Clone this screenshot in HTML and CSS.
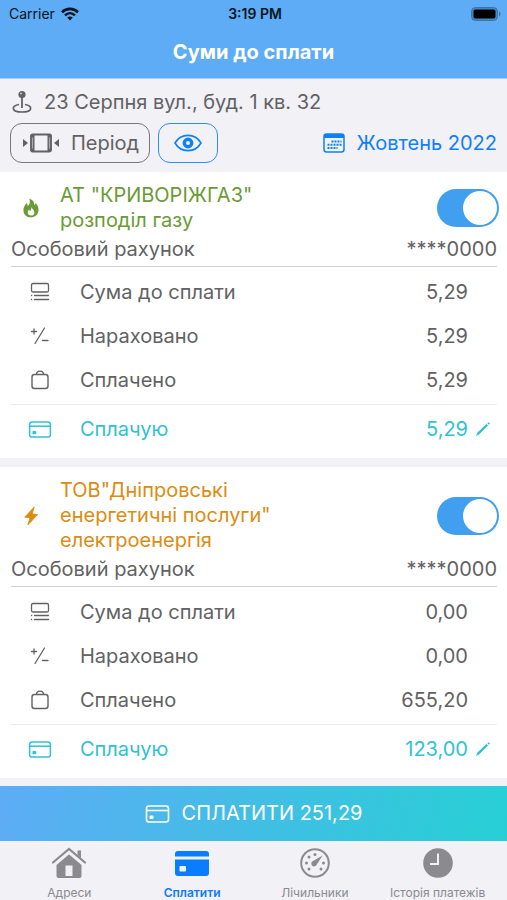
FILE: index.html
```html
<!DOCTYPE html>
<html lang="uk">
<head>
<meta charset="utf-8">
<meta name="viewport" content="width=device-width, initial-scale=1">
<title>Суми до сплати</title>
<link rel="stylesheet" href="styles.css">
</head>
<body>
<svg class="sprite" aria-hidden="true">
  <symbol id="i-sum" viewBox="0 0 20 20"><g fill="none" stroke="currentColor" stroke-width="1.3" stroke-linecap="round"><rect x="1.500" y="1.500" width="17" height="8.500" rx="1.500"/><path d="M4.500 13.500h14M4.500 17.500h14M1.500 13.500h.2M1.500 17.500h.2"/></g></symbol>
  <symbol id="i-calc" viewBox="0 0 20 20"><g fill="none" stroke="currentColor" stroke-width="1.300" stroke-linecap="round"><path d="M14.500 2L5 17.500M1.500 5.500h5M4 3v5M12.500 14.500h5.500"/></g></symbol>
  <symbol id="i-bag" viewBox="0 0 20 20"><g fill="none" stroke="currentColor" stroke-width="1.400"><rect x="2" y="4.500" width="16" height="14" rx="2.500"/><path d="M6.500 4.500C6.500 0 13.500 0 13.500 4.500"/></g></symbol>
  <symbol id="i-card" viewBox="0 0 24 18"><rect x="1" y="1" width="22" height="16" rx="2.500" fill="none" stroke="currentColor" stroke-width="1.600"/><path d="M1 5.500h22" stroke="currentColor" stroke-width="1.600"/><rect x="4" y="10.500" width="4" height="3.500" rx="1" fill="currentColor"/></symbol>
  <symbol id="i-pen" viewBox="0 0 16 16"><path d="M1 15l1.200-3.200L11.500 3l1.500 1.500L4 13.600zM12.300 2.300l1.300-1.100 1.400 1.300-1.200 1.300z" fill="currentColor"/></symbol>
</svg>

<header class="top">
  <div class="status">
    <div class="carrier">Carrier
      <svg class="wifi" viewBox="0 0 18 14"><g fill="none" stroke="#0b1420" stroke-width="2.600"><path d="M1 5.200C5.500.8 12.500.8 17 5.200"/><path d="M4 8.400c3-2.900 7-2.900 10 0"/></g><path d="M6.200 10.600c1.700-1.500 3.900-1.500 5.600 0L9 13.600z" fill="#0b1420"/></svg>
    </div>
    <div class="clock">3:19 PM</div>
    <div class="power">
      <svg class="battery" viewBox="0 0 30 14"><rect x=".5" y=".5" width="26" height="13" rx="4" fill="#4685bd" stroke="#3b74a8"/><rect x="2.500" y="2.500" width="22" height="9" rx="2" fill="#000"/><path d="M28 4.500c2 .6 2 4.400 0 5z" fill="#3b74a8"/></svg>
    </div>
  </div>
  <h1>Суми до сплати</h1>
</header>

<section class="filters">
  <div class="address">
    <svg class="pin" viewBox="0 0 20 24"><circle cx="10" cy="4.500" r="3.600" fill="currentColor"/><circle cx="9" cy="3.500" r="1" fill="#ccc"/><path d="M10 7v11" stroke="currentColor" stroke-width="1.800"/><path d="M7 14.500c-8 1.200-8 7.500 3 7.500s11-6.300 3-7.500" fill="none" stroke="currentColor" stroke-width="1.700"/></svg>
    <span>23 Серпня вул., буд. 1 кв. 32</span>
  </div>
  <div class="tools">
    <button class="btn period" type="button">
      <svg class="range" viewBox="0 0 36 20"><path d="M0 6l5 4-5 4zM36 6l-5 4 5 4z" fill="currentColor"/><rect x="8" y="1.500" width="20" height="17" rx="1.500" fill="none" stroke="currentColor" stroke-width="1.800"/><path d="M9.500 2v16M26.500 2v16" stroke="currentColor" stroke-width="4"/><path d="M9.500 4.500v11M26.500 4.500v11" stroke="#a9a9ad" stroke-width="1.200"/></svg>
      Період
    </button>
    <button class="btn view" type="button" aria-label="Показати">
      <svg class="eye" viewBox="0 0 28 18"><path d="M1 9C7-1.200 21-1.200 27 9 21 19.200 7 19.200 1 9z" fill="none" stroke="currentColor" stroke-width="1.600"/><circle cx="14" cy="9" r="3.700" fill="none" stroke="currentColor" stroke-width="3.400"/></svg>
    </button>
    <button class="month" type="button">
      <svg class="cal" viewBox="0 0 22 20"><rect x="1" y="1" width="20" height="18" rx="2.500" fill="none" stroke="currentColor" stroke-width="1.500"/><path d="M1 5V3a2 2 0 0 1 2-2h16a2 2 0 0 1 2 2v2z" fill="currentColor"/><path d="M8.500 8.500h10M4.500 11.800h14M4.500 15h10" stroke="currentColor" stroke-width="2" stroke-dasharray="2 1"/></svg>
      Жовтень 2022
    </button>
  </div>
</section>

<main>
  <article class="card gas">
    <div class="head">
      <svg class="kind" viewBox="0 0 18 22"><path d="M7 .5c5 1.500 6 4.500 5.500 7.500 1.200-.5 1.500-1.500 1.500-2.500 2.500 2.300 3.500 4.800 3.500 7.500 0 5-3.500 8.500-8.500 8.500S.5 18.300.5 13.700C.5 9 3 8 3.500 5.500 5 6.500 5.500 7.500 5.500 9 8 6.500 8.300 3.500 7 .5z" fill="currentColor"/><path d="M9.500 10c.4 2.200 3.300 3.400 3.300 6 0 2-1.500 3.500-3.700 3.500s-3.800-1.400-3.800-3.400c0-1.500.7-2.600 1.600-3.300.1 1 .5 1.500 1.100 1.800.9-1.200 1.500-2.600 1.500-4.600z" fill="#fff"/></svg>
      <h2 id="gas">АТ "КРИВОРІЖГАЗ"<br>розподіл газу</h2>
      <input class="switch" type="checkbox" role="switch" aria-labelledby="gas" checked>
    </div>
    <div class="account"><span>Особовий рахунок</span><span>****0000</span></div>
    <div class="lines">
      <div class="line"><svg class="ico"><use href="#i-sum"/></svg><span>Сума до сплати</span><b>5,29</b></div>
      <div class="line"><svg class="ico"><use href="#i-calc"/></svg><span>Нараховано</span><b>5,29</b></div>
      <div class="line"><svg class="ico"><use href="#i-bag"/></svg><span>Сплачено</span><b>5,29</b></div>
    </div>
    <button class="line pay" type="button"><svg class="ico"><use href="#i-card"/></svg><span>Сплачую</span><b>5,29</b><svg class="pen"><use href="#i-pen"/></svg></button>
  </article>

  <article class="card power-supply">
    <div class="head">
      <svg class="kind" viewBox="0 0 18 22"><path d="M12.500 1L2 12.300l6 .5L5.500 21 16.500 9.300l-6.200-.5z" fill="currentColor" stroke="currentColor" stroke-linejoin="round"/></svg>
      <h2 id="power">ТОВ"Дніпровські<br>енергетичні послуги"<br>електроенергія</h2>
      <input class="switch" type="checkbox" role="switch" aria-labelledby="power" checked>
    </div>
    <div class="account"><span>Особовий рахунок</span><span>****0000</span></div>
    <div class="lines">
      <div class="line"><svg class="ico"><use href="#i-sum"/></svg><span>Сума до сплати</span><b>0,00</b></div>
      <div class="line"><svg class="ico"><use href="#i-calc"/></svg><span>Нараховано</span><b>0,00</b></div>
      <div class="line"><svg class="ico"><use href="#i-bag"/></svg><span>Сплачено</span><b>655,20</b></div>
    </div>
    <button class="line pay" type="button"><svg class="ico"><use href="#i-card"/></svg><span>Сплачую</span><b>123,00</b><svg class="pen"><use href="#i-pen"/></svg></button>
  </article>
</main>

<button class="checkout" type="button"><svg class="checkout-ico"><use href="#i-card"/></svg>СПЛАТИТИ 251,29</button>

<nav class="tabs">
  <a href="#addresses"><svg viewBox="0 0 36 32"><path d="M5.500 17L18 6.500 30.500 17v12a2 2 0 0 1-2 2h-21a2 2 0 0 1-2-2z" fill="currentColor"/><path d="M2 15.500L18 2l16 13.500" fill="none" stroke="currentColor" stroke-width="2.200" stroke-linecap="round"/><path d="M26.500 3.500H30V11l-3.500-3z" fill="currentColor"/><path d="M5 17.500L18 6.500l13 11" fill="none" stroke="#f1f1f6" stroke-width="1.400"/><path d="M14.500 18.500h7V29h-7z" fill="#f1f1f6"/></svg>Адреси</a>
  <a href="#pay" class="active" aria-current="page"><svg viewBox="0 0 36 32"><path d="M1 9.500V7a3 3 0 0 1 3-3h28a3 3 0 0 1 3 3v2.500zM1 12.500h34V26a3 3 0 0 1-3 3H4a3 3 0 0 1-3-3z" fill="currentColor"/><rect x="5.500" y="19" width="6.500" height="5.500" rx="1" fill="#f1f1f6"/></svg>Сплатити</a>
  <a href="#meters"><svg viewBox="0 0 36 32"><circle cx="18" cy="16" r="13.800" fill="none" stroke="currentColor" stroke-width="2"/><g fill="currentColor"><circle cx="9.500" cy="16" r="1.500"/><circle cx="12" cy="10" r="1.500"/><circle cx="18" cy="7.500" r="1.500"/><circle cx="26.500" cy="16" r="1.500"/><circle cx="12" cy="22" r="1.500"/><circle cx="24" cy="22" r="1.500"/><path d="M25.500 8.500l-6 9.500a2.800 2.800 0 1 1-3.500-4z"/></g></svg>Лічильники</a>
  <a href="#history"><svg viewBox="0 0 36 32"><circle cx="18" cy="16" r="14.800" fill="currentColor"/><path d="M18 6.500V17h-8" fill="none" stroke="#f1f1f6" stroke-width="2"/></svg>Історія платежів</a>
</nav>
</body>
</html>
```
FILE: styles.css
```css
* { box-sizing: border-box; }

body {
  margin: 0;
  min-height: 100vh;
  display: flex;
  flex-direction: column;
  background: #f1f1f6;
  color: #626264;
  font: 400 20px/25px Inter, "Liberation Sans", sans-serif;
}

button { font: inherit; color: inherit; background: none; border: 0; padding: 0; margin: 0; cursor: pointer; }
svg { flex: none; display: block; }
.sprite { position: absolute; width: 0; height: 0; }

.top {
  background: #5dacf5;
  border-bottom: 1px solid #a9d1f8;
  height: 79px;
}
.status {
  display: grid;
  grid-template-columns: 1fr auto 1fr;
  align-items: center;
  height: 28px;
  padding: 0 6px 0 9px;
  color: #0b1420;
  font-size: 14px;
  line-height: 20px;
}
.carrier { display: flex; align-items: center; gap: 6px; }
.wifi { width: 18px; height: 14px; }
.clock { font-weight: 600; }
.power { display: flex; justify-content: flex-end; }
.battery { width: 30px; height: 14px; }
h1 {
  margin: 0;
  color: #fff;
  font-size: 20px;
  line-height: 48px;
  font-weight: 700;
  text-align: center;
}

.filters { padding: 10px 10px 9px; }
.address { display: flex; align-items: center; gap: 12px; height: 26px; padding-left: 2px; }
.pin { width: 20px; height: 24px; }
.tools { display: flex; align-items: center; gap: 8px; margin-top: 8px; }
.btn {
  display: flex;
  align-items: center;
  justify-content: center;
  height: 40px;
  border: 1px solid #77777a;
  border-radius: 12px;
}
.period { gap: 12px; padding: 0 10px 0 12px; }
.range { width: 36px; height: 20px; }
.view { width: 60px; color: #0f80fb; border-color: #2b8ffb; }
.eye { width: 28px; height: 18px; }
.month { display: flex; align-items: center; gap: 12px; margin-left: auto; color: #0f80fb; }
.cal { width: 22px; height: 20px; }

main { flex: 1; display: flex; flex-direction: column; gap: 9px; }
.card { background: #fff; padding: 11px 10px 5px 11px; }
.head { display: flex; align-items: center; margin-right: -2px; }
.kind { width: 16px; height: 20px; margin: 0 21px 0 12px; }
h2 { flex: 1; margin: 0; font: inherit; }
.gas .head { color: #6a9b35; }
.power-supply .head { color: #dc8c11; }

.switch {
  appearance: none;
  margin: 0;
  width: 62px;
  height: 38px;
  padding: 2px;
  border-radius: 19px;
  background: #409fef;
  display: flex;
  cursor: pointer;
}
.switch::before { content: ""; width: 34px; height: 34px; border-radius: 50%; background: #fff; }
.switch:checked { justify-content: flex-end; }
.switch:not(:checked) { background: #d9d9de; }

.account {
  display: flex;
  justify-content: space-between;
  align-items: center;
  height: 34px;
  border-bottom: 1px solid #d2d2d4;
}
.lines { padding: 3px 0 2px; border-bottom: 1px solid #ececef; }
.line { display: flex; align-items: center; width: 100%; height: 44px; padding: 0 29px 0 17px; text-align: left; }
.line b { margin-left: auto; font-weight: 400; }
.ico { width: 24px; height: 20px; margin-right: 28px; }
.pay { height: 48px; color: #2fc2d2; padding-right: 6px; }
.pay .ico { height: 17px; }
.pen { width: 16px; height: 16px; margin-left: 7px; }

.checkout {
  display: flex;
  align-items: center;
  justify-content: center;
  gap: 12px;
  height: 55px;
  margin-top: 8px;
  color: #fff;
  background: linear-gradient(105deg, #5dacf5, #27d0d5);
}
.checkout-ico { width: 25px; height: 18px; }

.tabs { display: grid; grid-template-columns: repeat(4, 1fr); height: 59px; padding: 6px 8px 0; }
.tabs a {
  display: flex;
  flex-direction: column;
  align-items: center;
  gap: 6px;
  color: #8a8a8f;
  font-size: 12px;
  line-height: 16px;
  text-decoration: none;
  white-space: nowrap;
}
.tabs svg { width: 36px; height: 32px; }
.tabs .active { color: #0a7cff; font-weight: 600; }
```
